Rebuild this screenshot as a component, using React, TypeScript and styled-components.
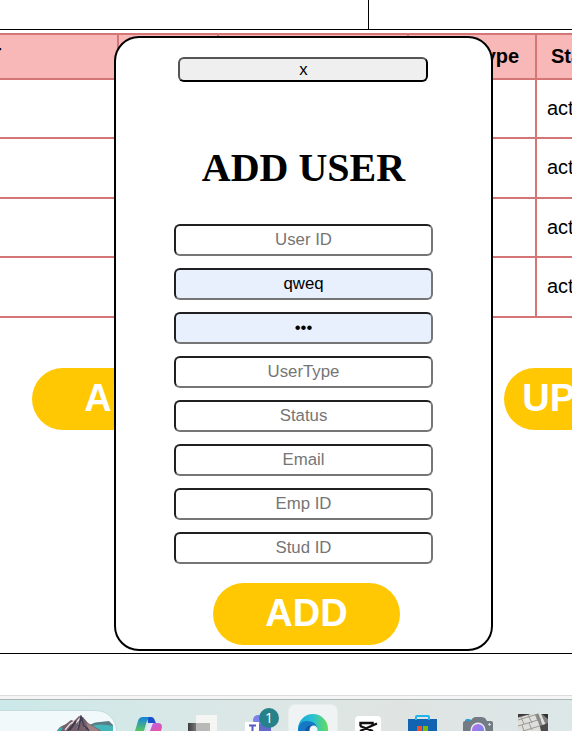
import React from "react";
import styled, { createGlobalStyle } from "styled-components";

const GlobalStyle = createGlobalStyle`
  * { box-sizing: border-box; }
  body { margin: 0; background: #fff; overflow: hidden; }
`;

const Screen = styled.div`
  position: relative;
  width: 572px;
  height: 731px;
  overflow: hidden;
  display: flex;
  flex-direction: column;
  background: #fff;
  font-family: "Liberation Sans", Arial, sans-serif;
  color: #000;
`;

const TopBar = styled.header`
  flex: none;
  display: flex;
  height: 30px;
  border-bottom: 1px solid #000;
`;

const TopBarSection = styled.div`
  width: 369px;
  border-right: 1px solid #000;
`;

const Content = styled.main`
  flex: none;
  height: 624px;
  padding-top: 3px;
  border-bottom: 1px solid #000;
`;

const UserTable = styled.div`
  width: 640px;
  margin-left: -12px;
  border-top: 2px solid #d57676;
`;

const Row = styled.div<{ $height: number; $head?: boolean }>`
  display: grid;
  grid-template-columns: 129px 100px 190px 128px 92px;
  height: ${(p) => p.$height}px;
  border-bottom: 2px solid #d57676;
  background: ${(p) => (p.$head ? "#f8b8b8" : "#fff")};
  font-weight: ${(p) => (p.$head ? 700 : 400)};
`;

const Cell = styled.div<{ $center?: boolean }>`
  display: flex;
  align-items: center;
  justify-content: ${(p) => (p.$center ? "center" : "flex-start")};
  padding: ${(p) => (p.$center ? "0 1px 0 0" : "0 0 1px 10px")};
  border-left: 2px solid #d57676;
  font-size: 20px;
  line-height: 23px;
`;

const FirstHeading = styled(Cell)`
  padding: 0 0 2px;
  text-indent: -1px;
`;

const Actions = styled.div`
  display: flex;
  gap: 285px;
  margin: 50px 0 0 32px;
`;

const PillButton = styled.button<{ $shift?: number }>`
  flex: none;
  width: 187px;
  height: 62px;
  padding: 0 0 1px ${(p) => p.$shift ?? 0}px;
  border: 0;
  border-radius: 31px;
  background: #ffc803;
  color: #fff;
  font: 700 38px "Liberation Sans", Arial, sans-serif;
`;

const Modal = styled.section`
  position: absolute;
  left: 114px;
  top: 36px;
  width: 379px;
  height: 615px;
  display: flex;
  flex-direction: column;
  align-items: center;
  padding-top: 19px;
  border: 2px solid #000;
  border-radius: 25px;
  background: #fff;
`;

const CloseButton = styled.button`
  width: 250px;
  height: 25px;
  margin-right: 1px;
  padding: 0 0 0 1px;
  border: 2px solid;
  border-color: #555 #000 #000 #555;
  border-radius: 6px;
  background: #efefef;
  color: #000;
  font: 16.8px "Liberation Sans", Arial, sans-serif;
  line-height: 19px;
`;

const Title = styled.h1`
  margin: 63px 0 0;
  font: 700 40px/46px "Liberation Serif", "Times New Roman", serif;
`;

const Fields = styled.form`
  display: flex;
  flex-direction: column;
  gap: 12px;
  margin: 33px 0 19px;
`;

const Field = styled.input<{ $filled?: boolean }>`
  width: 259px;
  height: 32px;
  padding: 0 2px;
  border: 2px solid;
  border-color: #202022 #767676 #767676 #202022;
  border-radius: 6px;
  outline: 0;
  background: ${(p) => (p.$filled ? "#e8f0fe" : "#fff")};
  color: #000;
  font: 16.8px "Liberation Sans", Arial, sans-serif;
  text-align: center;
  &::placeholder { color: #757575; opacity: 1; }
`;

const SubmitRow = styled.div`
  display: flex;
  padding-left: 6px;
`;

const WindowEdge = styled.div`
  flex: none;
  height: 5px;
  margin-top: 41px;
  border-top: 1px solid #dcdcdc;
  border-bottom: 1px solid #acb6b6;
  background: #f6f5f5;
`;

const Taskbar = styled.footer`
  flex: none;
  display: flex;
  align-items: flex-start;
  height: 31px;
  overflow: hidden;
  background: linear-gradient(90deg, #cce8e8 0, #d5e8e8 130px, #dce7e5 270px, #dfe4e2 400px, #dce7e8 572px);
`;

const SearchBox = styled.div`
  flex: none;
  display: flex;
  justify-content: flex-end;
  width: 117px;
  height: 42px;
  margin: 10px 18px 0 0;
  padding: 4px 2px 0 0;
  border-top: 1px solid #c6dddd;
  border-right: 1px solid #c6dddd;
  border-radius: 0 21px 21px 0;
  background: #f2f9fa;
`;

const Icon = styled.svg<{ $gap?: number }>`
  flex: none;
  display: block;
  margin-right: ${(p) => p.$gap ?? 0}px;
`;

const ActiveApp = styled.div`
  flex: none;
  width: 48px;
  height: 44px;
  margin: 5px 18px 0 0;
  padding: 9px 0 0 9px;
  border-radius: 6px;
  background: #eff3f3;
  box-shadow: 0 0 0 1px #e7ecec;
`;

const TeamsApp = styled.div`
  position: relative;
  flex: none;
  width: 26px;
  height: 31px;
  margin-right: 18px;
`;

const Badge = styled.span`
  position: absolute;
  left: 14px;
  top: 8px;
  width: 20px;
  height: 20px;
  border-radius: 50%;
  background: #26818b;
  color: #fff;
  font: 14px/20px "Open Sans", sans-serif;
  text-align: center;
`;

const fields = [
  { label: "User ID" },
  { label: "Username", value: "qweq" },
  { label: "Password", value: "•••" },
  { label: "UserType" },
  { label: "Status" },
  { label: "Email" },
  { label: "Emp ID" },
  { label: "Stud ID" },
];

function MountainIcon() {
  return (
    <Icon width="58" height="17" viewBox="0 0 58 17">
      <path d="M34 10q4-3 10-3l9-1 4 4v7H34Z" fill="#587d86" />
      <path d="M35 11q10-3 22 0v6H37Z" fill="#43b5bb" />
      <path d="m0 17 4-5 6-3 5-4 3 1 5-5 4 1 5 6 7 4 8 5Z" fill="#765f68" />
      <path d="m9 15 5-6 3-2-2 7m5-6 4-5-2 11m4-8 3 7" fill="none" stroke="#e8dce1" strokeWidth="1.3" />
      <path d="m12 16 6-8m4 7 3-13 3 9 7 6m-21-2 6-9" fill="none" stroke="#3f3c52" strokeWidth="1.8" />
      <path d="m30 8 8 4 7 5H34Z" fill="#a18180" />
      <path d="m0 17 5-5 2 1-3 4Z" fill="#31aeb3" />
    </Icon>
  );
}

function CopilotIcon() {
  return (
    <Icon width="27" height="31" viewBox="0 0 27 31" $gap={26}>
      <defs>
        <linearGradient id="copilotLeft" x2="0" y2="1">
          <stop stopColor="#1683dc" />
          <stop offset="1" stopColor="#57c560" />
        </linearGradient>
        <linearGradient id="copilotRight" x2="1" y2="1">
          <stop stopColor="#b163f5" />
          <stop offset="1" stopColor="#ed539b" />
        </linearGradient>
      </defs>
      <path d="M0 31 3 21q1-4 5-4h9q-5 1-6 7l-2 7Z" fill="url(#copilotLeft)" />
      <path d="M14 17h2q3 0 4 4l1 2h-8q-1-4 1-6Z" fill="#194fc8" />
      <path d="m13 31 2-4q1-4 5-4h3q4 0 4 4l-1 4Z" fill="url(#copilotRight)" />
      <path d="m11 31 2-5q1-3 5-3l-3 8Z" fill="#e4e8fa" />
    </Icon>
  );
}

function TaskViewIcon() {
  return (
    <Icon width="29" height="31" viewBox="0 0 29 31" $gap={28}>
      <defs>
        <linearGradient id="viewDark">
          <stop stopColor="#3c3c3c" />
          <stop offset="1" stopColor="#777" />
        </linearGradient>
      </defs>
      <path d="M8 15h21v16H8Z" fill="#f5f5f4" />
      <path d="M0 23h8v8H0Z" fill="url(#viewDark)" />
      <path d="M8 23h14v8H8Z" fill="#b9b9b8" />
    </Icon>
  );
}

function TeamsIcon() {
  return (
    <TeamsApp>
      <Icon width="26" height="31" viewBox="0 0 26 31">
        <circle cx="13" cy="20" r="5" fill="#7b83eb" />
        <path d="M10 24h16v7H10Z" fill="#6269c9" />
        <path d="M0 22h14v9H0Z" fill="#fff" />
        <path d="M4 25.5h7M7.5 25v6" fill="none" stroke="#555cc0" strokeWidth="2" />
      </Icon>
      <Badge>1</Badge>
    </TeamsApp>
  );
}

function EdgeIcon() {
  return (
    <Icon width="30" height="30" viewBox="0 0 30 30">
      <defs>
        <linearGradient id="edgeTop">
          <stop stopColor="#15a8dc" />
          <stop offset=".5" stopColor="#2bc1d3" />
          <stop offset="1" stopColor="#64dc57" />
        </linearGradient>
      </defs>
      <circle cx="15" cy="15" r="15" fill="url(#edgeTop)" />
      <path d="M0 16Q1 7 9 7q8 0 10 6l-3 2-1 15H8Q0 25 0 16Z" fill="#1678c4" />
      <path d="M7 17q1-6 7-6 5 1 5 6l-8 6Z" fill="#1255a6" />
      <ellipse cx="15.5" cy="16" rx="4" ry="4.5" fill="#eef8fb" />
    </Icon>
  );
}

function CapcutIcon() {
  return (
    <Icon width="26" height="31" viewBox="0 0 26 31" $gap={27}>
      <rect y="16" width="26" height="26" rx="4" fill="#fff" />
      <path d="M5.5 26v-3h12v3M22 23.5 5 31M5 26l13 5" fill="none" stroke="#101010" strokeWidth="2.4" />
    </Icon>
  );
}

function StoreIcon() {
  return (
    <Icon width="29" height="31" viewBox="0 0 29 31" $gap={26}>
      <path d="M0 19h29v12H0Z" fill="#1263b1" />
      <path d="M8 20v-3q0-1 1-1h11q1 0 1 1v3" fill="none" stroke="#20b3ed" strokeWidth="2" />
      <path d="M9 26h5v5H9Z" fill="#f25022" />
      <path d="M15 26h5v5h-5Z" fill="#7fba00" />
    </Icon>
  );
}

function CameraIcon() {
  return (
    <Icon width="30" height="31" viewBox="0 0 30 31" $gap={25}>
      <defs>
        <linearGradient id="lens" x2="1" y2="1">
          <stop stopColor="#bc70e5" />
          <stop offset="1" stopColor="#628df0" />
        </linearGradient>
      </defs>
      <path d="M2 21q0-2 2-2h2q2 0 2 2Z" fill="#1b9dde" />
      <path d="M0 23q0-2 2-2h5l3-3 2-1h7l3 1 2 3h4q2 0 2 2v8H0Z" fill="#747c83" />
      <circle cx="15" cy="30" r="7.5" fill="#e8eaf4" />
      <circle cx="15" cy="30" r="6" fill="url(#lens)" />
      <path d="M26.5 23v3M25 24.5h3" stroke="#d3d7da" />
    </Icon>
  );
}

function KeyboardIcon() {
  return (
    <Icon width="30" height="31" viewBox="0 0 30 31">
      <path d="M0 14h30v17H0Z" fill="#7f7f7e" />
      <path d="m0 18 13-4h10l7 16v1H0Z" fill="#dededb" />
      <path d="M0 14h12L0 17Z" fill="#3c3938" />
      <path d="m0 20 20-6M0 26l23-7M5 31l20-6M3 17l3 7m4-9 4 8m3-9 3 7M4 25l2 6m5-8 3 7" stroke="#999a97" fill="none" />
      <path d="m19 14 6 17" stroke="#888" strokeWidth="3" />
      <path d="m24 14 6 5v-5Z" fill="#333130" />
      <path d="m22 26 8-3v8h-7Z" fill="#4c4b49" />
    </Icon>
  );
}

export default function App() {
  return (
    <Screen>
      <GlobalStyle />
      <TopBar><TopBarSection /></TopBar>
      <Content>
        <UserTable>
          <Row $height={45} $head>
            <FirstHeading>T</FirstHeading>
            <Cell />
            <Cell />
            <Cell $center>User Type</Cell>
            <Cell $center>Status</Cell>
          </Row>
          {[59, 60, 59, 60].map((height, i) => (
            <Row key={i} $height={height}>
              <Cell /><Cell /><Cell /><Cell /><Cell>active</Cell>
            </Row>
          ))}
        </UserTable>
        <Actions>
          <PillButton>ADD</PillButton>
          <PillButton $shift={3}>UPDATE</PillButton>
        </Actions>
      </Content>
      <WindowEdge />
      <Taskbar>
        <SearchBox><MountainIcon /></SearchBox>
        <CopilotIcon />
        <TaskViewIcon />
        <TeamsIcon />
        <ActiveApp><EdgeIcon /></ActiveApp>
        <CapcutIcon />
        <StoreIcon />
        <CameraIcon />
        <KeyboardIcon />
      </Taskbar>
      <Modal>
        <CloseButton>x</CloseButton>
        <Title>ADD USER</Title>
        <Fields>
          {fields.map(({ label, value }) => (
            <Field
              key={label}
              aria-label={label}
              placeholder={label}
              defaultValue={value}
              $filled={Boolean(value)}
            />
          ))}
        </Fields>
        <SubmitRow>
          <PillButton>ADD</PillButton>
        </SubmitRow>
      </Modal>
    </Screen>
  );
}
